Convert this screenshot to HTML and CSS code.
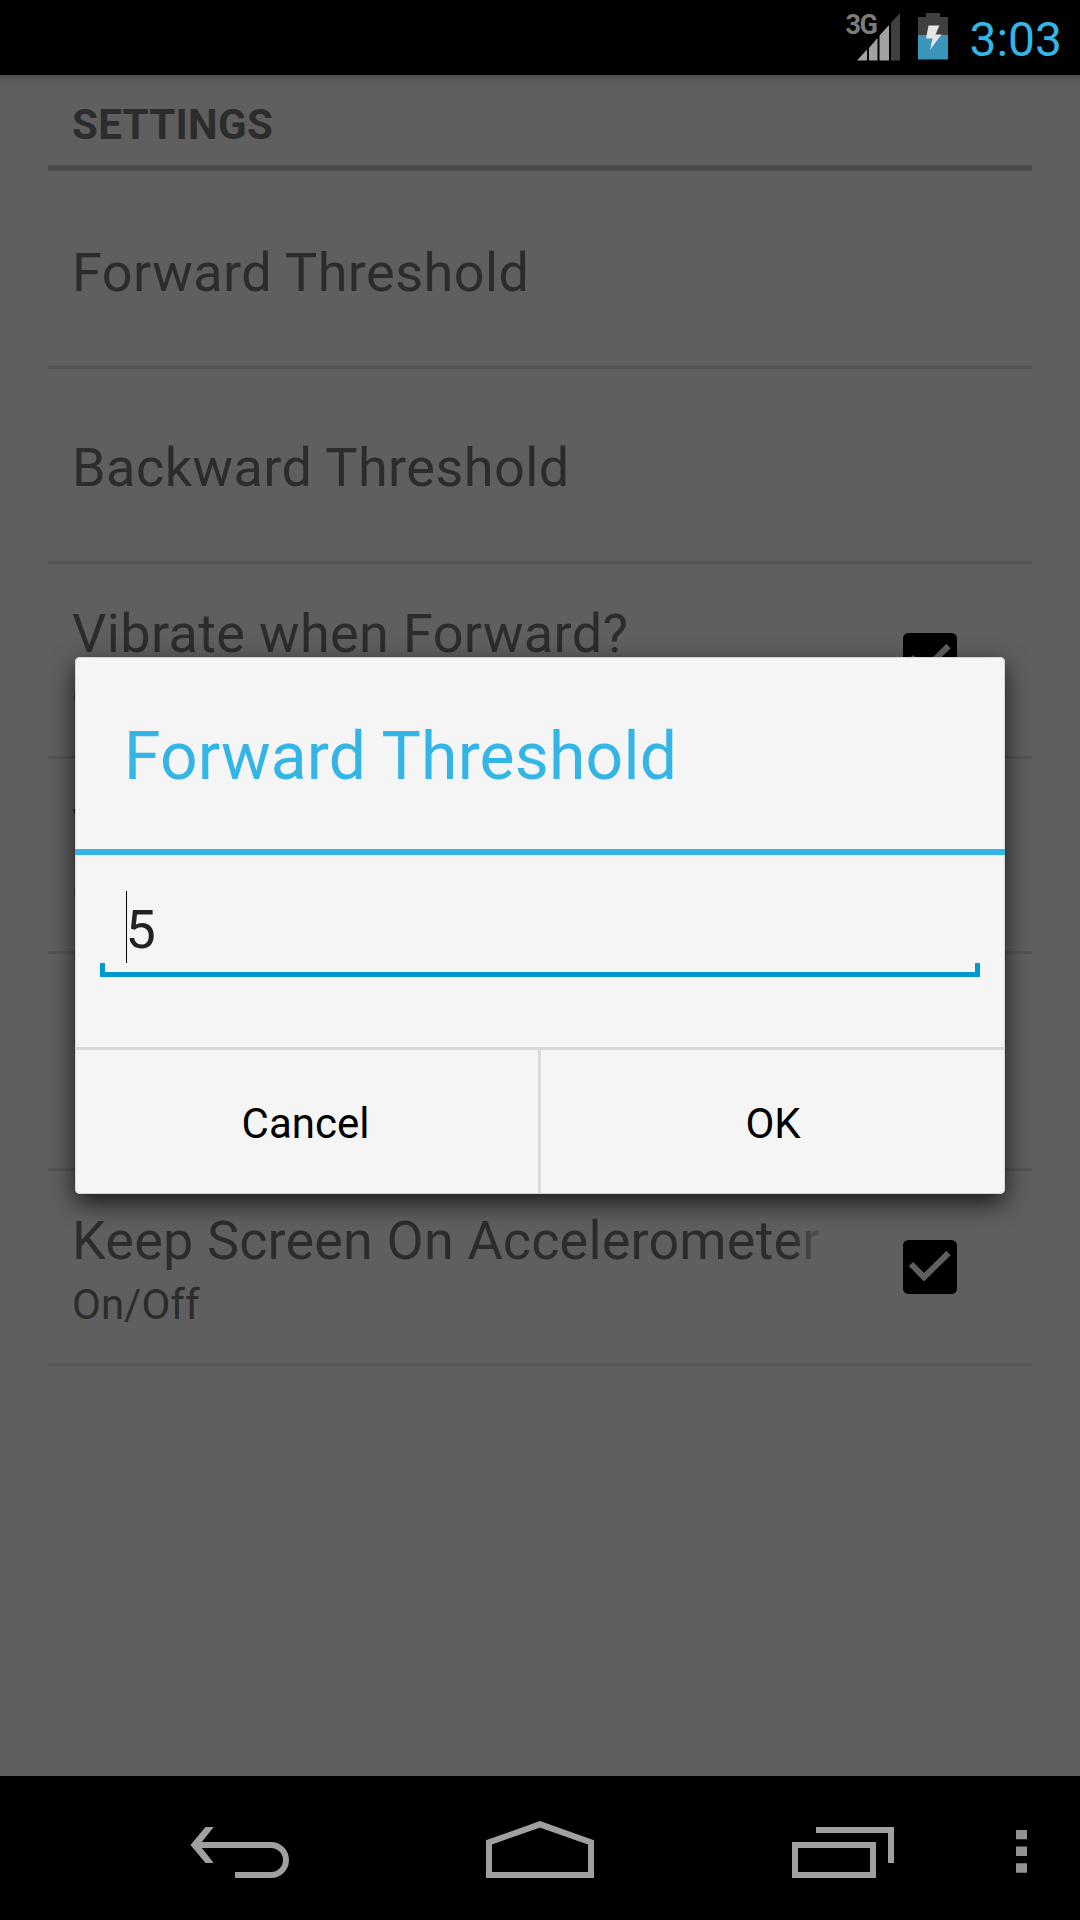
FILE: index.html
```html
<!DOCTYPE html>
<html lang="en">
<head>
<meta charset="utf-8">
<title>Settings</title>
<link rel="stylesheet" href="styles.css">
</head>
<body>
<div class="screen">
  <header class="status-bar">
    <div class="signal">
      <span class="network">3G</span>
      <svg class="signal-bars" width="43" height="48" viewBox="0 0 43 48">
        <path fill="#a2a2a2" d="M0 47.500L10 36.500V47.500ZM12 47.500V35L20.500 25V47.500ZM22.500 47.500V22.500L32 12V47.500Z"/>
        <path fill="#404040" d="M34 47.500V9.500L43 0V47.500Z"/>
      </svg>
    </div>
    <svg class="battery" width="30" height="47" viewBox="0 0 30 47">
      <path fill="#404040" d="M8 0H22V4H30V22H0V4H8Z"/>
      <path fill="#3a95b9" d="M0 22H30V46.500H0Z"/>
      <path fill="#e2e6e8" d="M10.500 12.500H21.500L17.500 21.500H23.500L12 37L14.500 25.500H8Z"/>
    </svg>
    <span class="clock">3:03</span>
  </header>

  <main class="settings">
    <h2 class="section-title">SETTINGS</h2>
    <ul class="list">
      <li class="row"><span class="title wide">Forward Threshold</span></li>
      <li class="row"><span class="title wide">Backward Threshold</span></li>
      <li class="row double">
        <div class="texts"><div class="title medium">Vibrate when Forward?</div><div class="summary">On/Off</div></div>
        <svg class="check" width="54" height="54" viewBox="0 0 54 54"><rect width="54" height="54" rx="5.500"/><path d="M8 24L21 37.200L45.500 13"/></svg>
      </li>
      <li class="row double">
        <div class="texts"><div class="title medium">Vibrate when Backward?</div><div class="summary">On/Off</div></div>
      </li>
      <li class="row tall"></li>
      <li class="row double">
        <div class="texts"><div class="title faded">Keep Screen On Accelerometer</div><div class="summary">On/Off</div></div>
        <svg class="check" width="54" height="54" viewBox="0 0 54 54"><rect width="54" height="54" rx="5.500"/><path d="M8 24L21 37.200L45.500 13"/></svg>
      </li>
    </ul>
  </main>

  <nav class="nav-bar">
    <svg class="nav-icon back" width="100" height="58" viewBox="0 0 100 58">
      <path fill="none" stroke="#a0a0a0" stroke-width="6" d="M6 25H81A15 15 0 0 1 81 55H45"/>
      <path fill="#a0a0a0" d="M0.500 25L15.500 7H23.700L9.500 25L23.700 43H15.500Z"/>
    </svg>
    <svg class="nav-icon home" width="108" height="58" viewBox="0 0 108 58">
      <path fill="none" stroke="#a0a0a0" stroke-width="6" d="M3 22.300L54 4.300L105 22.300V55H3Z"/>
    </svg>
    <svg class="nav-icon recents" width="102" height="58" viewBox="0 0 102 58">
      <path fill="none" stroke="#a0a0a0" stroke-width="6" d="M3 25H81V55H3ZM24 10H99V43"/>
    </svg>
    <svg class="nav-icon menu" width="11" height="58" viewBox="0 0 11 58">
      <path fill="#929292" d="M0 10H11V19.200H0ZM0 26.600H11V36H0ZM0 43.200H11V52.700H0Z"/>
    </svg>
  </nav>

  <section class="dialog" role="dialog">
    <h1 class="dialog-title">Forward Threshold</h1>
    <div class="dialog-body">
      <div class="field"><span class="caret"></span><span class="value">5</span></div>
    </div>
    <div class="actions">
      <button class="action">Cancel</button>
      <button class="action">OK</button>
    </div>
  </section>
</div>
</body>
</html>
```
FILE: styles.css
```css
* { box-sizing: border-box; }
body { margin: 0; font-family: Roboto, sans-serif; background: #5f5f5f; }

.screen {
  position: relative;
  display: flex;
  flex-direction: column;
  width: 1080px;
  height: 1920px;
  overflow: hidden;
  background: #5f5f5f;
}

.status-bar {
  display: flex;
  justify-content: flex-end;
  align-items: flex-start;
  height: 75px;
  flex: none;
  padding: 13px 18px 0 0;
  background: #000;
}
.signal { display: flex; width: 55px; margin-right: 18px; }
.network {
  width: 12px;
  margin-top: -1px;
  overflow: visible;
  font-size: 27px;
  line-height: 26px;
  font-weight: 700;
  letter-spacing: -1.5px;
  color: #7c7c7c;
}
.signal-bars { flex: none; }
.battery { margin-right: 21px; }
.clock { font-size: 48px; line-height: 56px; margin-top: -1px; color: #33b5e5; }

.settings {
  flex: 1;
  padding: 0 48px;
  background: linear-gradient(#4e4e4e, #5a5a5a 5px, #5f5f5f 12px);
  color: #2c2c2c;
}
.section-title {
  height: 96px;
  margin: 0 0 3px;
  padding: 25px 24px 0;
  border-bottom: 6px solid #4c4c4c;
  font-size: 42px;
  line-height: 50px;
  font-weight: 700;
  letter-spacing: .3px;
}
.list { margin: 0; padding: 0; list-style: none; }
.row {
  display: flex;
  align-items: center;
  justify-content: space-between;
  height: 195px;
  padding: 5px 75px 0 24px;
  border-bottom: 3px solid #545454;
}
.row.double { padding-top: 0; }
.row.tall { height: 217px; }
.texts { align-self: flex-start; padding-top: 38px; }
.title { font-size: 54px; line-height: 64px; white-space: nowrap; }
.title.wide { letter-spacing: .45px; }
.title.medium { letter-spacing: .36px; }
.summary { margin-top: 7px; font-size: 42px; line-height: 50px; }
.faded {
  width: 747px;
  overflow: hidden;
  letter-spacing: .15px;
  background: linear-gradient(90deg, #2c2c2c 720px, #5a5a5a 752px);
  background-clip: text;
  color: transparent;
}
.check { flex: none; }
.check path { fill: none; stroke: #5f5f5f; stroke-width: 6; }

.nav-bar {
  display: flex;
  height: 144px;
  flex: none;
  padding: 44px 0 0 190px;
  background: #000;
}
.nav-icon { flex: none; }
.home { margin-left: 196px; }
.recents { margin-left: 198px; }
.menu { margin-left: 122px; }

.dialog {
  position: absolute;
  left: 75px;
  top: 657px;
  width: 930px;
  height: 537px;
  display: flex;
  flex-direction: column;
  border-radius: 5px;
  background: #f5f5f5;
  box-shadow: inset 0 0 0 1px #d4d4d4, 0 9px 24px rgba(0, 0, 0, .72);
}
.dialog-title {
  height: 198px;
  margin: 0;
  padding: 61px 49px 0;
  border-bottom: 6px solid #33b5e5;
  font-size: 66px;
  line-height: 78px;
  font-weight: 400;
  letter-spacing: .2px;
  color: #33b5e5;
}
.dialog-body { height: 192px; padding: 36px 25px 0; }
.field {
  position: relative;
  display: flex;
  height: 86px;
  padding-left: 26px;
  border-bottom: 5px solid #0099cc;
}
.field::before, .field::after {
  content: "";
  position: absolute;
  bottom: 0;
  width: 5px;
  height: 9px;
  background: #0099cc;
}
.field::before { left: 0; }
.field::after { right: 0; }
.caret { width: 1px; height: 72px; background: #000; }
.value { font-size: 54px; line-height: 64px; margin: 7px 0 0 -1.5px; color: #222; }
.actions {
  display: flex;
  height: 147px;
  border-top: 3px solid #dadada;
}
.action {
  flex: 1;
  border: 0;
  padding: 3px 0 0;
  background: none;
  font: 42px Roboto, sans-serif;
  color: #000;
}
.action:first-child { flex: 0 0 463px; padding-right: 2px; }
.action + .action { border-left: 3px solid #dadada; }
```
